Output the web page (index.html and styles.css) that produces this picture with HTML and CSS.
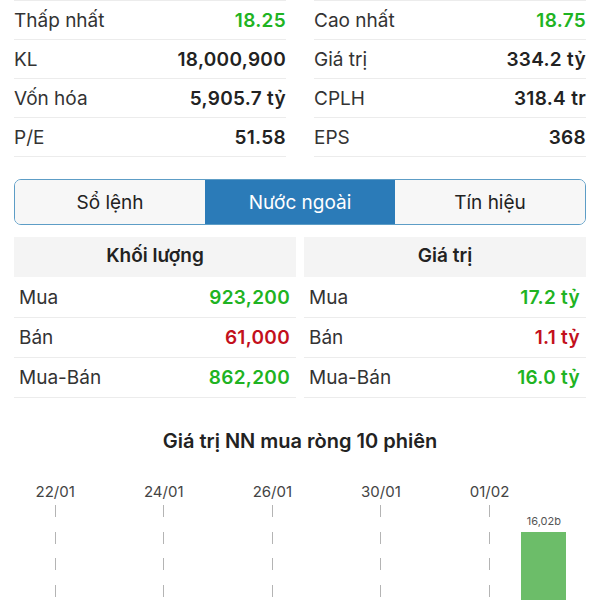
FILE: index.html
```html
<!DOCTYPE html>
<html lang="vi">
<head>
    <meta charset="UTF-8">
    <meta name="viewport" content="width=device-width, initial-scale=1.0">
    <title>Nước ngoài</title>
    <link rel="stylesheet" href="styles.css">
</head>
<body>

    <section class="stats">
        <div class="stat-col">
            <div class="stat-row"><span>Thấp nhất</span><b class="up">18.25</b></div>
            <div class="stat-row"><span>KL</span><b>18,000,900</b></div>
            <div class="stat-row"><span>Vốn hóa</span><b>5,905.7 tỷ</b></div>
            <div class="stat-row"><span>P/E</span><b>51.58</b></div>
        </div>
        <div class="stat-col">
            <div class="stat-row"><span>Cao nhất</span><b class="up">18.75</b></div>
            <div class="stat-row"><span>Giá trị</span><b>334.2 tỷ</b></div>
            <div class="stat-row"><span>CPLH</span><b>318.4 tr</b></div>
            <div class="stat-row"><span>EPS</span><b>368</b></div>
        </div>
    </section>

    <nav class="tabs">
        <div class="tab">Sổ lệnh</div>
        <div class="tab active">Nước ngoài</div>
        <div class="tab">Tín hiệu</div>
    </nav>

    <section class="foreign">
        <div class="foreign-col">
            <div class="foreign-head">Khối lượng</div>
            <div class="foreign-row"><span>Mua</span><b class="up">923,200</b></div>
            <div class="foreign-row"><span>Bán</span><b class="down">61,000</b></div>
            <div class="foreign-row"><span>Mua-Bán</span><b class="up">862,200</b></div>
        </div>
        <div class="foreign-col">
            <div class="foreign-head">Giá trị</div>
            <div class="foreign-row"><span>Mua</span><b class="up">17.2 tỷ</b></div>
            <div class="foreign-row"><span>Bán</span><b class="down">1.1 tỷ</b></div>
            <div class="foreign-row"><span>Mua-Bán</span><b class="up">16.0 tỷ</b></div>
        </div>
    </section>

    <h3 class="chart-title">Giá trị NN mua ròng 10 phiên</h3>

    <div class="chart">
        <div class="chart-col"><div class="chart-date">22/01</div><div class="chart-line"></div></div>
        <div class="chart-col"></div>
        <div class="chart-col"><div class="chart-date">24/01</div><div class="chart-line"></div></div>
        <div class="chart-col"></div>
        <div class="chart-col"><div class="chart-date">26/01</div><div class="chart-line"></div></div>
        <div class="chart-col"></div>
        <div class="chart-col"><div class="chart-date">30/01</div><div class="chart-line"></div></div>
        <div class="chart-col"></div>
        <div class="chart-col"><div class="chart-date">01/02</div><div class="chart-line"></div></div>
        <div class="chart-col">
            <div class="chart-date"></div>
            <div class="bar-value">16,02b</div>
            <div class="bar"></div>
        </div>
    </div>

</body>
</html>
```

FILE: styles.css
```css
body {
    margin: 0;
    font-family: Inter, "Liberation Sans", sans-serif;
    color: #333;
    background-color: #fff;
}
b {
    font-weight: 600;
    color: #222;
    letter-spacing: 0.3px;
}
.up {
    color: #20b322;
}
.down {
    color: #c3101c;
}
.stats {
    display: grid;
    grid-template-columns: 1fr 1fr;
    gap: 28px;
    padding: 0 14px;
}
.stat-col {
    border-top: 1px solid #ececec;
}
.stat-row {
    display: flex;
    justify-content: space-between;
    align-items: center;
    height: 38px;
    border-bottom: 1px solid #ececec;
    font-size: 19px;
}
.tabs {
    display: flex;
    height: 46px;
    box-sizing: border-box;
    margin: 22px 14px 0;
    border: 1.5px solid #5d9dc6;
    border-radius: 7px;
    overflow: hidden;
}
.tab {
    flex: 1;
    display: flex;
    align-items: center;
    justify-content: center;
    background-color: #f7f7f7;
    color: #222;
    font-size: 19px;
}
.tab.active {
    background-color: #2b7bb8;
    color: white;
}
.foreign {
    display: grid;
    grid-template-columns: 1fr 1fr;
    gap: 8px;
    margin: 12px 14px 0;
}
.foreign-head {
    display: flex;
    align-items: center;
    justify-content: center;
    height: 40px;
    padding-bottom: 3px;
    box-sizing: border-box;
    background-color: #f4f4f4;
    font-size: 19px;
    font-weight: 600;
    color: #222;
}
.foreign-row {
    display: flex;
    justify-content: space-between;
    align-items: center;
    height: 39px;
    padding: 0 6px 0 5px;
    border-bottom: 1px solid #ececec;
    font-size: 19px;
}
.foreign-head + .foreign-row {
    height: 40px;
}
.chart-title {
    margin: 31px 0 0;
    text-align: center;
    font-size: 20px;
    line-height: 24px;
    font-weight: 600;
    color: #222;
}
.chart {
    display: grid;
    grid-template-columns: repeat(10, 1fr);
    margin: 27px 29px 0 28px;
}
.chart-col {
    display: flex;
    flex-direction: column;
    align-items: center;
}
.chart-date {
    height: 24px;
    line-height: 24px;
    font-size: 15px;
    color: #444;
}
.chart-line {
    width: 1px;
    height: 140px;
    margin-top: 1px;
    background: repeating-linear-gradient(to bottom, #b4b4b4 0 12px, transparent 12px 26.7px);
}
.bar-value {
    margin-top: 10px;
    line-height: 14px;
    font-size: 11px;
    color: #555;
}
.bar {
    width: 45px;
    height: 120px;
    margin-top: 4px;
    background-color: #6cbd69;
}
```
